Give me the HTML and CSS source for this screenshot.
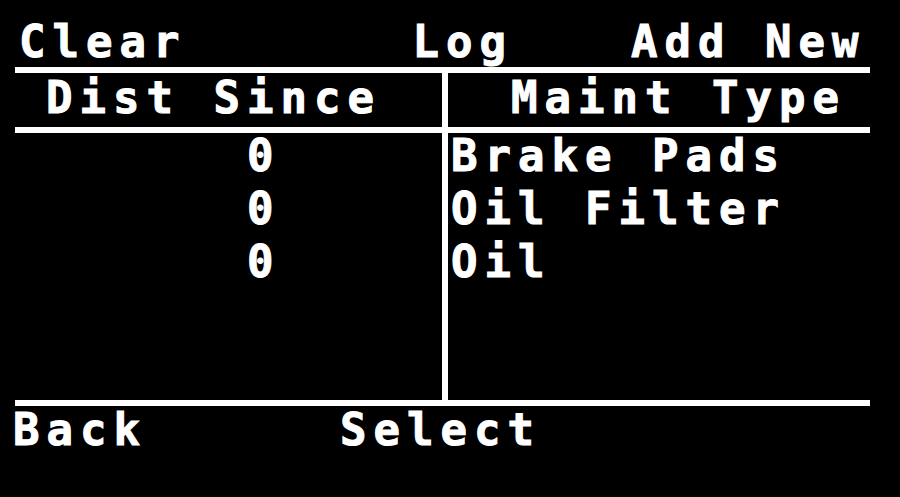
FILE: index.html
```html
<!DOCTYPE html>
<html lang="en">
<head>
  <meta charset="UTF-8">
  <meta name="viewport" content="width=device-width, initial-scale=1.0">
  <title>Maintenance Log</title>
  <link rel="stylesheet" href="styles.css">
</head>
<body>
  <div class="screen">
    <div class="top-bar">
      <span class="top-clear">Clear</span>
      <span class="top-log">Log</span>
      <span class="top-add">Add New</span>
    </div>

    <div class="log-table">
      <div class="col col-dist">
        <div class="col-head">Dist Since</div>
        <div class="col-body">
          <div class="row">0</div>
          <div class="row">0</div>
          <div class="row">0</div>
        </div>
      </div>
      <div class="col col-type">
        <div class="col-head">Maint Type</div>
        <div class="col-body">
          <div class="row">Brake Pads</div>
          <div class="row">Oil Filter</div>
          <div class="row">Oil</div>
        </div>
      </div>
    </div>

    <div class="bottom-bar">
      <span class="bottom-back">Back</span>
      <span class="bottom-select">Select</span>
    </div>
  </div>
</body>
</html>
```

FILE: styles.css
```css
:root {
  --lcd-bg: #000000;
  --lcd-fg: #ffffff;
  --line: 6px;
}

* {
  box-sizing: border-box;
  margin: 0;
  padding: 0;
}

body {
  background-color: var(--lcd-bg);
  color: var(--lcd-fg);
  font-family: "DejaVu Sans Mono", "Liberation Mono", monospace;
  font-weight: bold;
  font-size: 44px;
  letter-spacing: 7px;
  line-height: 44px;
  white-space: nowrap;
  -webkit-text-stroke: 1px var(--lcd-fg);
}

.screen {
  width: 900px;
  height: 497px;
  overflow: hidden;
}

/* soft keys along the top */
.top-bar {
  display: flex;
  height: 67px;
  padding-top: 20px;
  padding-left: 19px;
}

.top-log {
  margin-left: 226px;
}

.top-add {
  margin-left: 118px;
}

/* two column log */
.log-table {
  display: flex;
  width: 855px;
  margin-left: 15px;
  border-top: var(--line) solid var(--lcd-fg);
  border-bottom: var(--line) solid var(--lcd-fg);
}

.col-dist {
  width: 433px;
  border-right: var(--line) solid var(--lcd-fg);
}

.col-type {
  flex: 1;
}

.col-head {
  height: 60px;
  padding-bottom: 4px;
  line-height: 50px;
  border-bottom: var(--line) solid var(--lcd-fg);
}

.col-body {
  height: 267px;
}

.row {
  height: 53px;
  line-height: 46px;
}

.col-dist .col-head {
  padding-left: 31px;
}

.col-dist .row {
  padding-left: 232px;
}

.col-type .col-head {
  padding-left: 63px;
}

.col-type .row {
  padding-left: 3px;
}

/* soft keys along the bottom */
.bottom-bar {
  display: flex;
  padding-top: 2px;
  padding-left: 13px;
}

.bottom-select {
  margin-left: 193px;
}
```
